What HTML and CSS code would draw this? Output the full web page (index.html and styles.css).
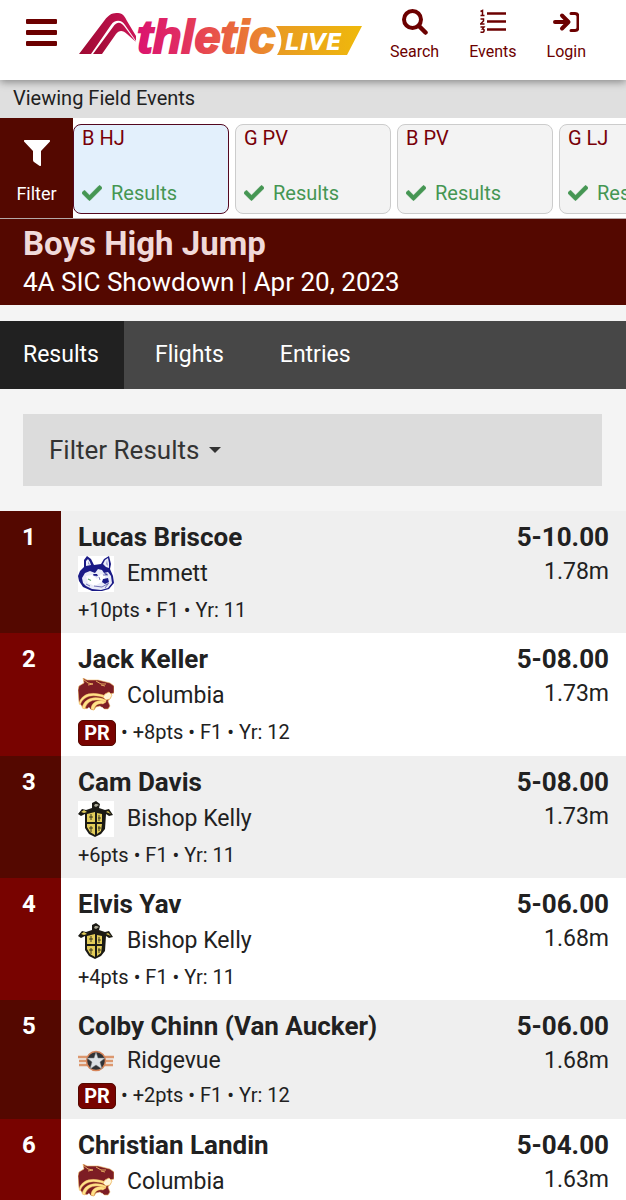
FILE: index.html
```html
<!DOCTYPE html>
<html lang="en">
<head>
<meta charset="utf-8">
<meta name="viewport" content="width=device-width, initial-scale=1">
<title>Boys High Jump - AthleticLIVE</title>
<link rel="stylesheet" href="styles.css">
</head>
<body>
<svg class="sprite" aria-hidden="true">
  <symbol id="check" viewBox="0 0 512 512"><path fill="currentColor" stroke="currentColor" stroke-width="14" d="M173.900 439.400l-166.400-166.400c-10-10-10-26.200 0-36.200l36.200-36.200c10-10 26.200-10 36.200 0L192 312.700 432.100 72.600c10-10 26.200-10 36.200 0l36.200 36.200c10 10 10 26.200 0 36.200l-294.400 294.400c-10 10-26.200 10-36.200 0z"/></symbol>
  <symbol id="husky" viewBox="0 0 36 36">
    <path fill="#fff" d="M0 0h36v36H0z"/>
    <path fill="#1a1a86" d="M2 15 6 11 6 4 9 0 13 3 16 9 23 8 26 3 31 0 33 8 32 13 35 20 36 27 31 33 24 35 14 35 5 31 1 25 0 20z"/>
    <path fill="#eceefa" d="M8 10 8 5 10 3 12 6 13 9zM25 8 27 4 30 2 31 7 31 12 28 11z"/>
    <path fill="#9a9ccb" d="M10 8V5l2 4zM28 8l1-4 1 6z"/>
    <path fill="#e9ebf8" d="M4 22 7 17 12 15 17 17 20 13 24 14 26 17 30 16 33 20 34 27 30 32 23 34 14 33 8 30 5 27z"/>
    <path fill="#fff" d="M8 20 14 19 19 23 23 18 27 20 27 24 20 28 17 30 10 27z"/>
    <path fill="none" stroke="#5356a4" stroke-width=".8" d="M15 19l4 1M25 19l5 0M16 30l8 1 7-4M8 28l4 2M21 21l1 3M30 28l-3 4"/>
    <path fill="#1a1a86" d="M25 23l5-1 1 4-4 2-3-2zM15 18l4 0 1 2-4-.500zM26 17l4 1-2 1z"/>
    <path stroke="#65a577" stroke-width="1.200" d="M10 23l3 1.500"/>
  </symbol>
  <symbol id="cougar" viewBox="0 0 36 36">
    <path fill="#7d1d24" stroke="#eeb967" stroke-width=".6" d="M5 0 9 2 20 2 32 5 36 8 36 15 32 16 33 19 30 23 32 28 30 31 26 31 22 28 18 29 16 32 5 30 1 24 0 12 1 8 6 5z"/>
    <path fill="#ffe289" stroke="#eeb45d" stroke-width=".4" d="M1 25C4 15 15 13 28 18L27 20C15 16 6 17 2 27zM4 30C6 20 17 17 28 22L28 24C18 20 9 22 7 31zM13 31C13 25 20 20 28 24L25 26C20 25 17 27 16 32z"/>
    <path fill="#fff6d8" stroke="#eeb45d" stroke-width=".7" d="M27 16 31 14 34 17 32 21 28 22 25 19z"/>
    <path fill="none" stroke="#eeb967" stroke-width=".9" d="M5 1l5 4 5 1-5 1M18 3l5 3h5M23 7l4 1"/>
    <path fill="#fff" d="m21 32 3-3 3 3zM8 32l3-3 2 3z"/>
  </symbol>
  <symbol id="knight" viewBox="0 0 36 36">
    <path fill="#fff" d="M0 0h36v36H0z"/>
    <path fill="#1b1a14" d="M14 2 18 0l4 3-1 4 6 2 4-1 4 6-4 1-3-2-1 15-4 5-6 3-6-3-4-6V13l-4 2-3-2 4-5 4 1 6-2z"/>
    <path fill="#e2cc5a" d="M3 11l3-2 3 2-3 1zM9 13l8-2v10H9zM9 23h8v11l-5-3-3-5zM19 12l5 1v8h-5zM19 23h5l-1 7-4 3zM28 11l2-1 3 3z"/>
    <path fill="none" stroke="#1b1a14" stroke-width=".8" d="M13 13v6M11 16h4M21 14v6M20 17h3M13 25v6M11 27h4M21 25v5M20 27h3"/>
    <path fill="#aaa895" d="M17 3h2l2 1-3 2-2-1z"/>
  </symbol>
  <symbol id="star" viewBox="0 0 36 22">
    <path stroke="#dc976e" stroke-width="2.500" d="M0 7h36M1 11h34M1 15h34"/>
    <circle cx="18" cy="11" r="9.500" fill="#303235" stroke="#d7865b" stroke-width="1.500"/>
    <path fill="#dce1e5" stroke="#777c80" stroke-width=".5" d="m18 2 2 6h7l-5 4 2 7-6-4-6 4 2-7-5-4h7z"/>
  </symbol>
</svg>

<header class="topbar">
  <button class="menu" aria-label="Menu"><span></span><span></span><span></span></button>
  <a class="brand" href="#" aria-label="AthleticLIVE">
    <svg viewBox="0 0 286 60" role="img" aria-label="AthleticLIVE">
      <defs>
        <linearGradient id="word" gradientUnits="userSpaceOnUse" x1="58" y1="0" x2="200" y2="0"><stop offset="0" stop-color="#db136f"/><stop offset=".3" stop-color="#e02c62"/><stop offset=".5" stop-color="#e84b4e"/><stop offset=".7" stop-color="#e96c3b"/><stop offset="1" stop-color="#eb9727"/></linearGradient>
        <linearGradient id="swoosh" x1="0" y1="0" x2="1" y2="0"><stop stop-color="#9d0a32"/><stop offset="1" stop-color="#cc1457"/></linearGradient>
        <linearGradient id="flag"><stop stop-color="#e99b23"/><stop offset="1" stop-color="#efb90b"/></linearGradient>
      </defs>
      <path fill="url(#swoosh)" d="M0 46 25 13C31 5 34 5 39 5C44 5 46 9 48 13L57 28 57 33 46 17C43 12 36 11 32 17L12 46z"/>
      <path fill="url(#swoosh)" d="M14 46 34 19C38 13 42 14 45 18L57 34 48 26C44 22 40 22 37 26L23 46z"/>
      <text class="word" x="58" y="45">thletic</text>
      <path fill="url(#flag)" d="M197 18H283L268 47H198C204 38 204 27 197 18z"/>
      <text class="live" x="206" y="42">LIVE</text>
    </svg>
  </a>
  <nav class="quick" aria-label="Main">
    <a href="#"><svg viewBox="0 0 26 26"><circle cx="10.500" cy="10.500" r="8.500" fill="none" stroke="currentColor" stroke-width="4"/><path stroke="currentColor" stroke-width="4.500" stroke-linecap="round" d="m17 17 6.500 6.500"/></svg>Search</a>
    <a href="#"><svg viewBox="0 0 26 26"><path fill="none" stroke="currentColor" stroke-width="2.500" d="M7 4.500h19M7 12.500h19M7 20.500h19"/><path fill="none" stroke="currentColor" stroke-width="1.500" d="M.5 2.500 2.500 1.500V6M.5 6.500h4M.5 10h3v2l-3 3h4M.5 18h3.500l-1.500 2q2 0 1.500 2t-3.500 1"/></svg>Events</a>
    <a href="#"><svg viewBox="0 0 26 26"><path fill="none" stroke="currentColor" stroke-width="4" stroke-linecap="round" stroke-linejoin="round" d="M2 13h13M9 6.500l6.500 6.500L9 19.500"/><path fill="none" stroke="currentColor" stroke-width="3" stroke-linecap="round" d="M18 4.500h4q3 0 3 3v11q0 3-3 3h-4"/></svg>Login</a>
  </nav>
</header>

<p class="viewing">Viewing Field Events</p>

<div class="strip">
  <button class="filter"><svg viewBox="0 0 26 26"><path fill="currentColor" d="M1 0h24q2 0 .5 2L17 11v14q0 2-2 .5L10 22q-1-.5-1-2v-9L.5 2Q-1 0 1 0z"/></svg>Filter</button>
  <nav class="events" aria-label="Field events">
    <a class="event current" href="#">B HJ<span><svg><use href="#check"/></svg>Results</span></a>
    <a class="event" href="#">G PV<span><svg><use href="#check"/></svg>Results</span></a>
    <a class="event" href="#">B PV<span><svg><use href="#check"/></svg>Results</span></a>
    <a class="event" href="#">G LJ<span><svg><use href="#check"/></svg>Results</span></a>
  </nav>
</div>

<main>
  <div class="banner">
    <h1>Boys High Jump</h1>
    <p>4A SIC Showdown | Apr 20, 2023</p>
  </div>
  <nav class="tabs" aria-label="Event pages">
    <a class="current" href="#">Results</a><a href="#">Flights</a><a href="#">Entries</a>
  </nav>
  <button class="filter-results">Filter Results <span class="caret"></span></button>

  <table class="results" aria-label="Results">
    <tbody>
      <tr><th scope="row">1</th><td class="athlete"><div class="name">Lucas Briscoe</div><div class="team"><svg><use href="#husky"/></svg>Emmett</div><div class="detail">+10pts • F1 • Yr: 11</div></td><td class="mark"><strong>5-10.00</strong><span>1.78m</span></td></tr>
      <tr><th scope="row">2</th><td class="athlete"><div class="name">Jack Keller</div><div class="team"><svg><use href="#cougar"/></svg>Columbia</div><div class="detail best"><b>PR</b>• +8pts • F1 • Yr: 12</div></td><td class="mark"><strong>5-08.00</strong><span>1.73m</span></td></tr>
      <tr><th scope="row">3</th><td class="athlete"><div class="name">Cam Davis</div><div class="team"><svg><use href="#knight"/></svg>Bishop Kelly</div><div class="detail">+6pts • F1 • Yr: 11</div></td><td class="mark"><strong>5-08.00</strong><span>1.73m</span></td></tr>
      <tr><th scope="row">4</th><td class="athlete"><div class="name">Elvis Yav</div><div class="team"><svg><use href="#knight"/></svg>Bishop Kelly</div><div class="detail">+4pts • F1 • Yr: 11</div></td><td class="mark"><strong>5-06.00</strong><span>1.68m</span></td></tr>
      <tr><th scope="row">5</th><td class="athlete"><div class="name">Colby Chinn (Van Aucker)</div><div class="team"><svg class="wide"><use href="#star"/></svg>Ridgevue</div><div class="detail best"><b>PR</b>• +2pts • F1 • Yr: 12</div></td><td class="mark"><strong>5-06.00</strong><span>1.68m</span></td></tr>
      <tr><th scope="row">6</th><td class="athlete"><div class="name">Christian Landin</div><div class="team"><svg><use href="#cougar"/></svg>Columbia</div></td><td class="mark"><strong>5-04.00</strong><span>1.63m</span></td></tr>
    </tbody>
  </table>
</main>
</body>
</html>
```
FILE: styles.css
```css
* { box-sizing: border-box; }
body { margin: 0; background: #f4f4f4; color: #212121; font-family: Roboto, "Liberation Sans", sans-serif; }
h1, p { margin: 0; }
a { color: inherit; text-decoration: none; }
button { border: 0; margin: 0; font: inherit; color: inherit; cursor: pointer; }
.sprite { display: none; }

.topbar { position: relative; display: flex; align-items: flex-start; height: 80px; background: #fff; color: #6c0000; box-shadow: 0 2px 8px rgba(0, 0, 0, .4); }
.menu { display: flex; flex-direction: column; gap: 6px; margin: 19px 22px 0 26px; padding: 0; background: none; }
.menu span { width: 31px; height: 5px; border-radius: 1px; background: currentColor; }
.brand { margin-top: 8px; }
.brand svg { display: block; width: 286px; height: 60px; }
.word { font: italic bold 47px "Liberation Sans", sans-serif; fill: url(#word); stroke: url(#word); stroke-width: 2px; }
.live { font: italic bold 23px "DejaVu Sans", sans-serif; fill: #fff; }
.quick { flex: 1; display: flex; justify-content: flex-end; gap: 30px; padding: 9px 40px 0 0; }
.quick a { display: flex; flex-direction: column; align-items: center; gap: 5px; font-size: 16px; line-height: 24px; }
.quick svg { width: 26px; height: 26px; }

.viewing { padding: 4px 13px; height: 38px; background: #dfdfdf; font-size: 20px; line-height: 28px; }

.strip { display: flex; height: 101px; border-bottom: 1px solid #b5a8a8; background: #fff; }
.filter { flex: none; display: flex; flex-direction: column; align-items: center; width: 73px; padding: 22px 0 0; background: #540800; color: #fff; font-size: 18px; line-height: 24px; gap: 16px; }
.filter svg { width: 26px; height: 26px; }
.events { display: flex; gap: 6px; flex: 1; padding: 6px 0 4px; overflow: hidden; }
.event { flex: none; display: flex; flex-direction: column; justify-content: space-between; width: 156px; padding: 1px 8px 8px; border: 1px solid #ccc; border-radius: 8px; background: #f3f3f3; color: #780008; font-size: 20px; line-height: 24px; }
.event.current { border-color: #540820; background: #e3f0fc; }
.event span { display: flex; align-items: center; gap: 9px; color: #459653; }
.event svg { width: 20px; height: 20px; }

.banner { padding: 6px 23px; height: 86px; background: #540800; color: #fff; font-size: 26px; line-height: 38px; }
.banner h1 { font-size: 33px; line-height: 38px; color: #f1dada; }
.tabs { display: flex; margin-top: 16px; background: #474747; color: #fff; font-size: 23px; line-height: 28px; }
.tabs a { padding: 20px 25px 20px 31px; }
.tabs .current { padding-left: 23px; background: #212121; }
.filter-results { display: flex; align-items: center; width: calc(100% - 47px); height: 72px; margin: 25px 24px 25px 23px; padding: 0 26px; gap: 10px; background: #dcdcdc; color: #333; font-size: 26px; }
.caret { border: 6px solid transparent; border-top-color: currentColor; border-bottom: 0; }

.results { width: 100%; border-collapse: collapse; }
.results tr { background: #fff; }
.results tr:nth-child(odd) { background: #efefef; }
.results th, .results td { padding: 10px 0 7px; vertical-align: top; }
.results th { width: 61px; padding-right: 3px; background: #780300; color: #fff; font-size: 24px; line-height: 32px; }
.results tr:nth-child(odd) th { background: #540800; }
.results .athlete { padding-left: 17px; }
.name { font-size: 26px; font-weight: bold; line-height: 32px; }
.team { display: flex; align-items: center; gap: 13px; margin: 3px 0 2px; font-size: 23px; line-height: 32px; }
.team svg { width: 36px; height: 36px; }
.team .wide { height: 22px; }
.detail { display: flex; align-items: center; font-size: 20px; line-height: 32px; }
.best { line-height: 33px; }
.detail b { width: 38px; margin-right: 5px; border: 1px solid #540800; border-radius: 5px; background: #780300; color: #fff; line-height: 24px; text-align: center; }
.results .mark { padding-right: 17px; text-align: right; }
.mark strong, .mark span { display: block; line-height: 32px; }
.mark strong { font-size: 26px; }
.mark span { margin-top: 3px; font-size: 23px; }
```
